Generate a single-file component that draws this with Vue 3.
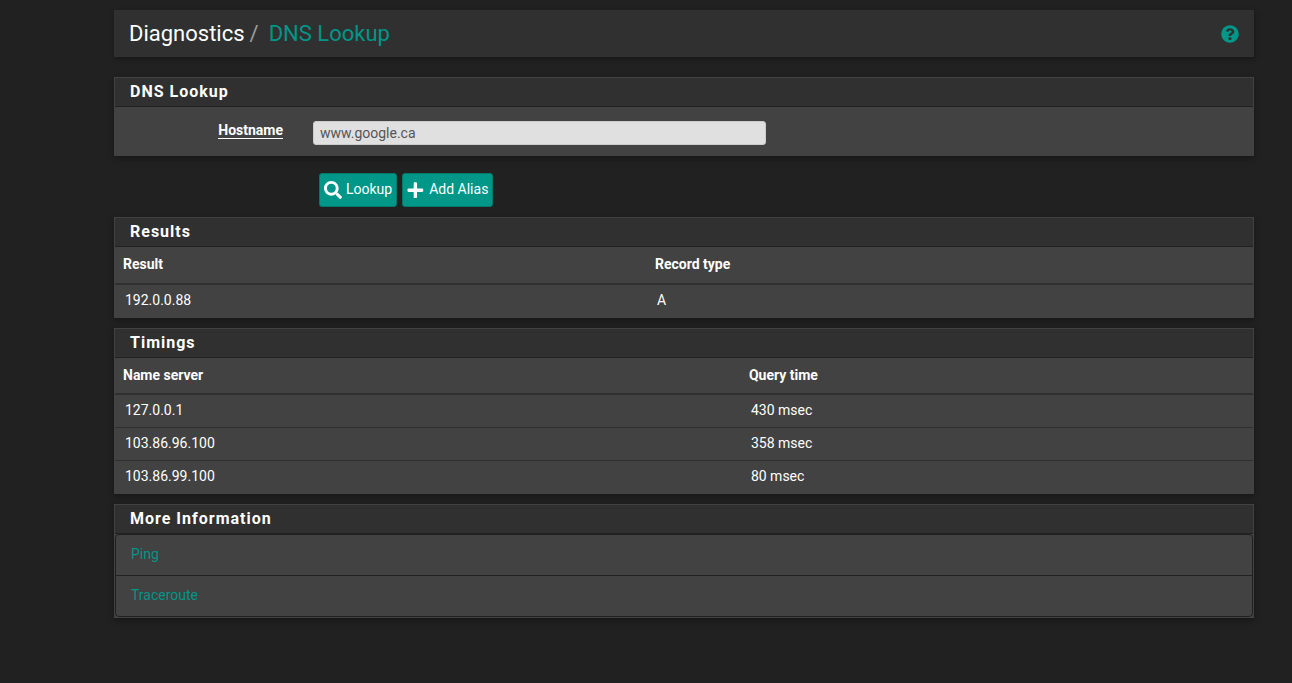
<script setup>
import { ref } from 'vue'

const hostname = ref('www.google.ca')

const results = [{ value: '192.0.0.88', type: 'A' }]

const timings = [
  { server: '127.0.0.1', time: '430 msec' },
  { server: '103.86.96.100', time: '358 msec' },
  { server: '103.86.99.100', time: '80 msec' }
]

const links = ['Ping', 'Traceroute']
</script>

<template>
  <main class="page">
    <header class="page-header">
      <h1 class="crumbs">
        <span>Diagnostics</span>
        <span class="slash">/</span>
        <a href="#" class="current">DNS Lookup</a>
      </h1>
      <a href="#" class="help" aria-label="Help">
        <svg viewBox="0 0 512 512" aria-hidden="true"><path d="M504 256c0 136.997-111.043 248-248 248S8 392.997 8 256C8 119.083 119.043 8 256 8s248 111.083 248 248zM262.655 90c-54.497 0-89.255 22.957-116.549 63.758-3.536 5.286-2.353 12.415 2.715 16.258l34.699 26.31c5.205 3.947 12.621 3.008 16.665-2.122 17.864-22.658 30.113-35.797 57.303-35.797 20.429 0 45.698 13.148 45.698 32.958 0 14.976-12.363 22.667-32.534 33.976C247.128 238.528 216 254.941 216 296v4c0 6.627 5.373 12 12 12h56c6.627 0 12-5.373 12-12v-1.333c0-28.462 83.186-29.647 83.186-106.667 0-58.002-60.165-102-116.531-102zM256 338c-25.365 0-46 20.635-46 46 0 25.364 20.635 46 46 46s46-20.636 46-46c0-25.364-20.635-46-46-46z" /></svg>
      </a>
    </header>

    <form @submit.prevent>
      <section class="panel">
        <h2 class="panel-title">DNS Lookup</h2>
        <div class="form-row">
          <div class="label-cell"><label for="host">Hostname</label></div>
          <div class="input-cell"><input id="host" v-model="hostname" type="text" /></div>
        </div>
      </section>
      <div class="actions">
        <button type="submit" class="btn">
          <svg class="icon" viewBox="0 0 512 512" aria-hidden="true"><path d="M505 442.7L405.3 343c-4.5-4.5-10.6-7-17-7H372c27.6-35.3 44-79.7 44-128C416 93.1 322.9 0 208 0S0 93.1 0 208s93.1 208 208 208c48.3 0 92.7-16.4 128-44v16.3c0 6.4 2.5 12.5 7 17l99.7 99.7c9.4 9.4 24.6 9.4 33.9 0l28.3-28.3c9.4-9.4 9.4-24.6.1-34zM208 336c-70.7 0-128-57.2-128-128 0-70.7 57.2-128 128-128 70.7 0 128 57.2 128 128 0 70.7-57.2 128-128 128z" /></svg>
          <span>Lookup</span>
        </button>
        <button type="button" class="btn">
          <svg class="icon" viewBox="0 0 512 512" aria-hidden="true"><path d="M430 214H286V70c0-17.67-14.33-32-32-32h-32c-17.67 0-32 14.33-32 32v144H46c-17.67 0-32 14.33-32 32v32c0 17.67 14.33 32 32 32h144v144c0 17.67 14.33 32 32 32h32c17.67 0 32-14.33 32-32V310h144c17.67 0 32-14.33 32-32v-32c0-17.67-14.33-32-32-32z" /></svg>
          <span>Add Alias</span>
        </button>
      </div>
    </form>

    <section class="panel">
      <h2 class="panel-title">Results</h2>
      <table class="results">
        <thead>
          <tr><th scope="col">Result</th><th scope="col">Record type</th></tr>
        </thead>
        <tbody>
          <tr v-for="r in results" :key="r.value"><td>{{ r.value }}</td><td>{{ r.type }}</td></tr>
        </tbody>
      </table>
    </section>

    <section class="panel">
      <h2 class="panel-title">Timings</h2>
      <table class="timings">
        <thead>
          <tr><th scope="col">Name server</th><th scope="col">Query time</th></tr>
        </thead>
        <tbody>
          <tr v-for="t in timings" :key="t.server"><td>{{ t.server }}</td><td>{{ t.time }}</td></tr>
        </tbody>
      </table>
    </section>

    <section class="panel">
      <h2 class="panel-title">More Information</h2>
      <ul class="links">
        <li v-for="link in links" :key="link"><a href="#">{{ link }}</a></li>
      </ul>
    </section>
  </main>
</template>

<style>
body {
  background: #212121;
}
</style>

<style scoped>
.page {
  padding: 10px 38px 20px 114px;
  color: #fff;
  font-family: Roboto, "Liberation Sans", sans-serif;
  font-size: 14px;
  line-height: 20px;
}
.page *,
.page {
  box-sizing: border-box;
}
a {
  color: #009688;
  text-decoration: none;
}
.page-header {
  display: flex;
  align-items: center;
  justify-content: space-between;
  height: 47px;
  padding: 0 15px;
  margin-bottom: 20px;
  background: #303030;
  box-shadow: 1px 2px 5px rgba(0, 0, 0, 0.3);
}
.crumbs {
  display: flex;
  gap: 5px;
  margin: 0;
  font-size: 22px;
  font-weight: 400;
  line-height: 24px;
}
.slash {
  color: #9e9e9e;
}
.current {
  margin-left: 5px;
}
.help {
  display: flex;
}
.help svg {
  width: 18px;
  height: 18px;
  fill: #009688;
}
.panel {
  margin-bottom: 10px;
  border: 1px solid #424242;
  background: #424242;
  box-shadow: 0 3px 6px rgba(0, 0, 0, 0.3);
}
.panel-title {
  height: 29px;
  margin: 0;
  padding: 0 15px;
  border-bottom: 1px solid #212121;
  background: #303030;
  font-size: 16px;
  font-weight: 700;
  line-height: 28px;
  letter-spacing: 1px;
}
.form-row {
  display: grid;
  grid-template-columns: 2fr 5fr 5fr;
  margin: 0 -10px;
  padding: 14px 0 10px;
}
.label-cell,
.input-cell {
  display: flex;
  padding: 0 15px;
}
.label-cell {
  justify-content: flex-end;
  align-items: flex-start;
}
label {
  padding-top: 2px;
  border-bottom: 1px solid #fff;
  font-weight: 700;
  line-height: 15px;
}
input {
  width: 100%;
  height: 24px;
  padding: 0 6px;
  border: 1px solid #ccc;
  border-radius: 3px;
  background: #e0e0e0;
  color: #555;
  font: inherit;
}
.actions {
  display: flex;
  gap: 5px;
  margin: 17px 0 10px;
  padding-left: calc(100% / 6 + 15px);
}
.btn {
  display: flex;
  align-items: center;
  gap: 4px;
  height: 34px;
  padding: 0 4px;
  border: 1px solid #00796b;
  border-radius: 3px;
  background: #009688;
  color: #fff;
  font: inherit;
}
.btn span {
  padding-bottom: 2px;
}
.icon {
  width: 18px;
  height: 18px;
  fill: #fff;
}
table {
  width: 100%;
  border-collapse: separate;
  border-spacing: 0;
  table-layout: fixed;
}
th {
  height: 38px;
  padding: 0 8px 2px;
  border-bottom: 2px solid #303030;
  text-align: left;
  font-weight: 700;
}
td {
  height: 33px;
  padding: 0 10px 2px;
  border-bottom: 1px solid #303030;
}
tbody tr:last-child td {
  height: 32px;
  border-bottom: 0;
}
.results th:first-child {
  width: 46.75%;
}
.timings th {
  height: 37px;
}
.timings th:first-child {
  width: 55%;
}
.links {
  margin: 0;
  padding: 0;
  border: 1px solid #212121;
  border-radius: 4px;
  list-style: none;
}
.links li {
  padding: 9px 15px 11px;
}
.links li + li {
  border-top: 1px solid #212121;
}
.links a {
  display: block;
}
</style>
